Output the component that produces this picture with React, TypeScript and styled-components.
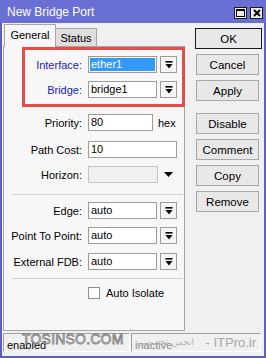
import React from 'react';
import styled, { createGlobalStyle } from 'styled-components';

const GlobalStyle = createGlobalStyle`
  html, body {
    margin: 0;
    padding: 0;
    background: #f0f0f0;
  }
  body {
    width: 266px;
    height: 358px;
    overflow: hidden;
  }
`;

const Window = styled.div`
  position: relative;
  box-sizing: border-box;
  width: 266px;
  height: 358px;
  display: flex;
  flex-direction: column;
  background: #f0f0f0;
  border: 2px solid #5a5fc6;
  border-top: none;
  font-family: 'Liberation Sans', Arial, sans-serif;
  font-size: 11px;
  color: #000;
`;

const TitleBar = styled.div`
  height: 23px;
  margin: 0 -2px;
  padding: 0 3px 0 7px;
  display: flex;
  align-items: center;
  background: #6a6fd5;
  color: #fff;
  font-size: 12px;
`;

const TitleText = styled.div`
  flex: 1;
  padding-top: 1px;
`;

const TitleButtons = styled.div`
  display: flex;
  gap: 3px;
  margin-top: 2px;
`;

const TitleButton = styled.div`
  box-sizing: border-box;
  width: 13px;
  height: 12px;
  display: flex;
  align-items: center;
  justify-content: center;
  background: #ececec;
  border: 1px solid #1c1c1c;
`;

const Body = styled.div`
  display: flex;
  height: 308px;
  padding-left: 1px;
`;

const LeftColumn = styled.div`
  width: 182px;
  display: flex;
  flex-direction: column;
`;

const TabStrip = styled.div`
  height: 23px;
  display: flex;
  align-items: flex-end;
  padding-left: 1px;
`;

const Tab = styled.div<{ $active?: boolean }>`
  box-sizing: border-box;
  position: relative;
  z-index: ${(p) => (p.$active ? 2 : 1)};
  height: ${(p) => (p.$active ? 23 : 19)}px;
  width: ${(p) => (p.$active ? 52 : 42)}px;
  margin-bottom: -1px;
  margin-left: ${(p) => (p.$active ? 0 : -1)}px;
  padding-top: ${(p) => (p.$active ? 4 : 3)}px;
  text-align: center;
  background: ${(p) => (p.$active ? '#f7f7f7' : '#dedede')};
  border: 1px solid #a6a6a6;
  border-bottom: ${(p) => (p.$active ? 'none' : '1px solid #a6a6a6')};
`;

const Panel = styled.div`
  position: relative;
  box-sizing: border-box;
  height: 285px;
  background: #f7f7f7;
  border: 1px solid #a6a6a6;
  display: flex;
  flex-direction: column;
`;

const Row = styled.div<{ $mt: number }>`
  display: flex;
  align-items: center;
  height: 17px;
  margin-top: ${(p) => p.$mt}px;
`;

const Label = styled.div<{ $blue?: boolean }>`
  width: 78px;
  margin-right: 6px;
  text-align: right;
  white-space: nowrap;
  color: ${(p) => (p.$blue ? '#1d1dbf' : '#000')};
`;

const Field = styled.div<{ $w: number; $disabled?: boolean }>`
  box-sizing: border-box;
  width: ${(p) => p.$w}px;
  height: 17px;
  padding: 1px;
  display: flex;
  background: ${(p) => (p.$disabled ? '#f0f0f0' : '#fff')};
  border: 1px solid ${(p) => (p.$disabled ? '#c4c4c4' : '#9c9c9c')};
`;

const FieldText = styled.div<{ $selected?: boolean }>`
  flex: 1;
  padding-left: 1px;
  line-height: 13px;
  background: ${(p) => (p.$selected ? '#3399ff' : 'transparent')};
  color: ${(p) => (p.$selected ? '#fff' : '#000')};
`;

const DropButton = styled.div`
  box-sizing: border-box;
  width: 17px;
  height: 17px;
  margin-left: 3px;
  display: flex;
  align-items: center;
  justify-content: center;
  background: #f5f5f5;
  border: 1px solid #9c9c9c;
`;

const Unit = styled.div`
  margin-left: 5px;
`;

const ArrowOnly = styled.div`
  margin-left: 6px;
  display: flex;
  align-items: center;
`;

const Separator = styled.div<{ $mt: number }>`
  height: 1px;
  margin: ${(p) => p.$mt}px 1px 0 8px;
  background: #d2d2d2;
`;

const CheckRow = styled.div<{ $mt: number }>`
  display: flex;
  align-items: center;
  height: 13px;
  margin-top: ${(p) => p.$mt}px;
  padding-left: 84px;
`;

const CheckBox = styled.div`
  box-sizing: border-box;
  width: 12px;
  height: 12px;
  background: #fff;
  border: 1px solid #8e8e8e;
`;

const CheckLabel = styled.div`
  margin-left: 6px;
`;

const Highlight = styled.div`
  position: absolute;
  left: 18px;
  top: 0;
  width: 163px;
  height: 60px;
  box-sizing: border-box;
  border: 3px solid #e24e4a;
  pointer-events: none;
`;

const RightColumn = styled.div`
  margin-left: 11px;
  padding-top: 5px;
  display: flex;
  flex-direction: column;
  gap: 5px;
`;

const Button = styled.div<{ $primary?: boolean; $gapBefore?: boolean }>`
  box-sizing: border-box;
  width: ${(p) => (p.$primary ? 67 : 63)}px;
  height: 21px;
  margin-left: ${(p) => (p.$primary ? -1 : 0)}px;
  margin-top: ${(p) => (p.$gapBefore ? 7 : 0)}px;
  display: flex;
  align-items: center;
  justify-content: center;
  background: #e8e8e8;
  border: 1px solid ${(p) => (p.$primary ? '#1a1a1a' : '#a9a9a9')};
  font-size: 11.5px;
`;

const StatusBar = styled.div`
  display: flex;
  margin-top: 2px;
  padding-left: 1px;
  height: 19px;
`;

const StatusField = styled.div<{ $w: number; $faded?: boolean }>`
  box-sizing: border-box;
  width: ${(p) => p.$w}px;
  margin-right: 1px;
  padding: 5px 0 0 3px;
  border-top: 1px solid #a0a0a0;
  border-left: 1px solid #a0a0a0;
  border-right: 1px solid #fff;
  border-bottom: 1px solid #fff;
  color: ${(p) => (p.$faded ? '#8a8a8a' : '#000')};
`;

const Watermark = styled.div`
  position: absolute;
  left: 20px;
  top: 327px;
  display: flex;
  align-items: center;
  white-space: nowrap;
  pointer-events: none;
`;

const WatermarkSite = styled.div`
  font-family: 'Liberation Sans', Arial, sans-serif;
  font-size: 14px;
  line-height: 16px;
  color: rgba(240, 240, 240, 0.6);
  -webkit-text-stroke: 0.8px #7c7c7c;
  letter-spacing: 0.2px;
`;

const WatermarkFa = styled.div`
  width: 72px;
  margin-left: 6px;
  margin-top: 6px;
  font-family: 'DejaVu Sans', sans-serif;
  font-size: 9px;
  text-align: center;
  color: #b4b4b4;
`;

const WatermarkItpro = styled.div`
  margin-left: 4px;
  margin-top: 8px;
  font-family: 'Liberation Sans', Arial, sans-serif;
  font-size: 13px;
  color: #a8a8a8;
`;

const DropIcon = () => (
  <svg width="8" height="8" viewBox="0 0 8 8">
    <rect x="0.5" y="0" width="7" height="1.6" fill="#000" />
    <polygon points="0.5,3 7.5,3 4,7.5" fill="#000" />
  </svg>
);

const Combo = ({ value, selected }: { value: string; selected?: boolean }) => (
  <>
    <Field $w={69}>
      <FieldText $selected={selected}>{value}</FieldText>
    </Field>
    <DropButton>
      <DropIcon />
    </DropButton>
  </>
);

export default function App() {
  return (
    <>
      <GlobalStyle />
      <Window>
        <TitleBar>
          <TitleText>New Bridge Port</TitleText>
          <TitleButtons>
            <TitleButton>
              <svg width="9" height="8" viewBox="0 0 9 8">
                <rect x="0.5" y="0.5" width="8" height="7" fill="none" stroke="#000" />
                <rect x="0.5" y="0.5" width="8" height="1.5" fill="#000" />
              </svg>
            </TitleButton>
            <TitleButton>
              <svg width="8" height="8" viewBox="0 0 8 8">
                <path d="M1 1 L7 7 M7 1 L1 7" stroke="#000" strokeWidth="2" />
              </svg>
            </TitleButton>
          </TitleButtons>
        </TitleBar>

        <Body>
          <LeftColumn>
            <TabStrip>
              <Tab $active>General</Tab>
              <Tab>Status</Tab>
            </TabStrip>
            <Panel>
              <Row $mt={9}>
                <Label $blue>Interface:</Label>
                <Combo value="ether1" selected />
              </Row>
              <Row $mt={8}>
                <Label $blue>Bridge:</Label>
                <Combo value="bridge1" />
              </Row>
              <Row $mt={16}>
                <Label>Priority:</Label>
                <Field $w={65}>
                  <FieldText>80</FieldText>
                </Field>
                <Unit>hex</Unit>
              </Row>
              <Row $mt={10}>
                <Label>Path Cost:</Label>
                <Field $w={89}>
                  <FieldText>10</FieldText>
                </Field>
              </Row>
              <Row $mt={8}>
                <Label>Horizon:</Label>
                <Field $w={70} $disabled />
                <ArrowOnly>
                  <svg width="9" height="5" viewBox="0 0 9 5">
                    <polygon points="0,0 9,0 4.5,5" fill="#000" />
                  </svg>
                </ArrowOnly>
              </Row>
              <Separator $mt={11} />
              <Row $mt={7}>
                <Label>Edge:</Label>
                <Combo value="auto" />
              </Row>
              <Row $mt={8}>
                <Label>Point To Point:</Label>
                <Combo value="auto" />
              </Row>
              <Row $mt={9}>
                <Label>External FDB:</Label>
                <Combo value="auto" />
              </Row>
              <Separator $mt={8} />
              <CheckRow $mt={7}>
                <CheckBox />
                <CheckLabel>Auto Isolate</CheckLabel>
              </CheckRow>
              <Highlight />
            </Panel>
          </LeftColumn>

          <RightColumn>
            <Button $primary>OK</Button>
            <Button>Cancel</Button>
            <Button>Apply</Button>
            <Button $gapBefore>Disable</Button>
            <Button>Comment</Button>
            <Button>Copy</Button>
            <Button>Remove</Button>
          </RightColumn>
        </Body>

        <StatusBar>
          <StatusField $w={127}>enabled</StatusField>
          <StatusField $w={130} $faded>inactive</StatusField>
        </StatusBar>

        <Watermark>
          <WatermarkSite>TOSINSO.COM</WatermarkSite>
          <WatermarkFa dir="rtl">انجمن تخصصی</WatermarkFa>
          <WatermarkItpro>- ITPro.ir</WatermarkItpro>
        </Watermark>
      </Window>
    </>
  );
}
